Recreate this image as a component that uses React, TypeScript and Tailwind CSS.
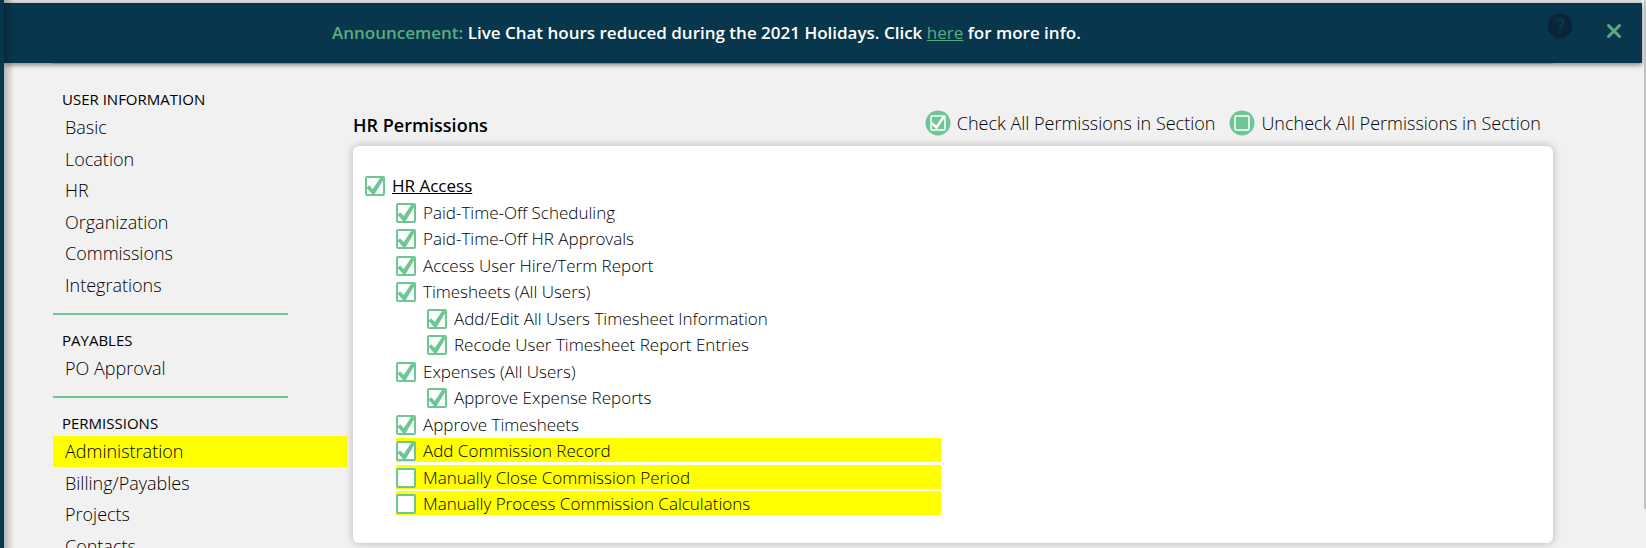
import { useState } from 'react'

interface NavGroup {
    title: string;
    items: string[];
}

interface Permission {
    id: string;
    label: string;
    level: number;
    checked: boolean;
    highlighted?: boolean;
}

const navGroups: NavGroup[] = [
    {
        title: 'USER INFORMATION',
        items: ['Basic', 'Location', 'HR', 'Organization', 'Commissions', 'Integrations'],
    },
    { title: 'PAYABLES', items: ['PO Approval'] },
    {
        title: 'PERMISSIONS',
        items: ['Administration', 'Billing/Payables', 'Projects', 'Contacts'],
    },
]

const initialPermissions: Permission[] = [
    { id: 'hr-access', label: 'HR Access', level: 0, checked: true },
    { id: 'pto-scheduling', label: 'Paid-Time-Off Scheduling', level: 1, checked: true },
    { id: 'pto-approvals', label: 'Paid-Time-Off HR Approvals', level: 1, checked: true },
    { id: 'hire-term', label: 'Access User Hire/Term Report', level: 1, checked: true },
    { id: 'timesheets', label: 'Timesheets (All Users)', level: 1, checked: true },
    { id: 'timesheets-edit', label: 'Add/Edit All Users Timesheet Information', level: 2, checked: true },
    { id: 'timesheets-recode', label: 'Recode User Timesheet Report Entries', level: 2, checked: true },
    { id: 'expenses', label: 'Expenses (All Users)', level: 1, checked: true },
    { id: 'expenses-approve', label: 'Approve Expense Reports', level: 2, checked: true },
    { id: 'timesheets-approve', label: 'Approve Timesheets', level: 1, checked: true },
    { id: 'commission-add', label: 'Add Commission Record', level: 1, checked: true, highlighted: true },
    { id: 'commission-close', label: 'Manually Close Commission Period', level: 1, checked: false, highlighted: true },
    { id: 'commission-process', label: 'Manually Process Commission Calculations', level: 1, checked: false, highlighted: true },
]

const indents = ['ml-0', 'ml-[31px]', 'ml-[62px]']

function Banner({ onClose }: { onClose: () => void }) {
    return (
        <header className="relative flex h-[60px] items-center pr-4 pl-[328px] bg-[#08374d] shadow-[0_2px_5px_rgba(0,0,0,0.45)]">
            <p className="flex-1 text-[17px] font-semibold text-white">
                <span className="text-[#5cab7d]">Announcement:</span> Live Chat hours reduced during the 2021 Holidays. Click{' '}
                <a href="#info" className="font-normal text-[#5cab7d] underline">here</a> for more info.
            </p>
            <button type="button" aria-label="Help" className="mr-[33px] mb-3.5">
                <svg width="26" height="26" viewBox="0 0 26 26" fill="none">
                    <circle cx="13" cy="13" r="12.5" fill="#0b2439" />
                    <path d="M9.5 9.2C10 7.6 11.3 6.8 13 6.8s3.4 1 3.4 2.9c0 2.7-3.6 2.8-3.6 6" stroke="#08374d" strokeWidth="2.4" />
                    <circle cx="12.8" cy="18.8" r="1.6" fill="#08374d" />
                </svg>
            </button>
            <button type="button" aria-label="Close announcement" onClick={onClose} className="mr-1 mb-1">
                <svg width="16" height="16" viewBox="0 0 16 16" stroke="#5cab7d" strokeWidth="3" strokeLinecap="round">
                    <path d="M2.5 2.5l11 11M13.5 2.5l-11 11" />
                </svg>
            </button>
        </header>
    )
}

function Sidebar() {
    return (
        <nav className="w-[294px] shrink-0 pt-[23px]">
            {navGroups.map((group, index) => (
                <div key={group.title} className={index > 0 ? 'mt-3' : ''}>
                    {index > 0 && <hr className="mb-[13px] w-[235px] border-t-2 border-[#6fc695]" />}
                    <h2 className="pl-[9px] text-[15px] leading-[25px] font-normal">{group.title}</h2>
                    <ul>
                        {group.items.map((item) => (
                            <li key={item} className="odd:mb-px">
                                <a
                                    href="#section"
                                    className={`block pl-3 text-lg leading-[31px] font-light ${item === 'Administration' ? 'bg-[#ffff00]' : ''}`}
                                >
                                    {item}
                                </a>
                            </li>
                        ))}
                    </ul>
                </div>
            ))}
        </nav>
    )
}

function PermissionRow({ permission, onToggle }: { permission: Permission; onToggle: (id: string) => void }) {
    return (
        <li className={`odd:mb-[3px] even:mb-0.5 ${indents[permission.level]}`}>
            <div className={`flex h-6 items-center gap-[7px] pt-0.5 ${permission.highlighted ? 'w-[545px] bg-[#ffff00]' : ''}`}>
                <span className="relative size-5 shrink-0">
                    <input
                        id={permission.id}
                        type="checkbox"
                        checked={permission.checked}
                        onChange={() => onToggle(permission.id)}
                        className="block size-5 appearance-none rounded-[2px] border-2 border-[#6fc695] bg-white"
                    />
                    {permission.checked && (
                        <svg className="pointer-events-none absolute inset-0" width="20" height="20" viewBox="0 0 20 20" fill="#6fc695">
                            <path d="M1.5 11.8l2.5-2.6 3.8 3.8L15.4 1.5l3.6 1.3L9.4 18.6H7.4z" />
                        </svg>
                    )}
                </span>
                <label
                    htmlFor={permission.id}
                    className={permission.level === 0 ? 'text-[17px] leading-6 font-normal underline' : 'text-[17px] leading-6 font-light'}
                >
                    {permission.label}
                </label>
            </div>
        </li>
    )
}

function SectionButton({ label, checked, onClick }: { label: string; checked: boolean; onClick: () => void }) {
    return (
        <button type="button" onClick={onClick} className="flex items-center gap-1.5 text-lg font-light">
            <svg width="26" height="26" viewBox="0 0 26 26" fill="none">
                <circle cx="13" cy="13" r="12.5" fill="#6fc695" />
                <rect x="6" y="6" width="14" height="14" rx="1" stroke="white" strokeWidth="1.5" />
                {checked && <path d="M6.5 13l5 4.5L18.5 7" stroke="white" strokeWidth="2.5" />}
            </svg>
            {label}
        </button>
    )
}

export default function App() {
    const [permissions, setPermissions] = useState(initialPermissions)
    const [bannerOpen, setBannerOpen] = useState(true)

    const toggle = (id: string) =>
        setPermissions(permissions.map((p) => (p.id === id ? { ...p, checked: !p.checked } : p)))

    const setAll = (checked: boolean) => setPermissions(permissions.map((p) => ({ ...p, checked })))

    return (
        <div className="relative h-screen overflow-hidden border-l-4 border-[#08374d] bg-[#f1f1f1] font-['Open_Sans',sans-serif] text-black">
            <div className="mr-1">
                <div className="h-[3px] bg-[#dddddd]" />
                {bannerOpen && <Banner onClose={() => setBannerOpen(false)} />}
                <div className="mr-[89px] ml-[49px] flex border-t border-[#c8c8c8]">
                    <Sidebar />
                    <main className="ml-1.5 flex-1 pt-[45px]">
                        <div className="flex items-start justify-between pr-3 pb-[7px]">
                            <h1 className="pt-0.5 text-lg font-semibold">HR Permissions</h1>
                            <div className="flex gap-3.5">
                                <SectionButton label="Check All Permissions in Section" checked onClick={() => setAll(true)} />
                                <SectionButton label="Uncheck All Permissions in Section" checked={false} onClick={() => setAll(false)} />
                            </div>
                        </div>
                        <ul className="rounded-md bg-white px-3 pt-[27px] pb-[25px] shadow-[0_0_8px_rgba(0,0,0,0.25)]">
                            {permissions.map((permission) => (
                                <PermissionRow key={permission.id} permission={permission} onToggle={toggle} />
                            ))}
                        </ul>
                    </main>
                </div>
            </div>
            {/* shade cast by the collapsed rail */}
            <div className="pointer-events-none absolute inset-y-0 left-0 w-2.5 bg-linear-to-r from-black/25 to-transparent" />
            {/* scroll thumb */}
            <div className="absolute top-0 right-0 bottom-[39px] w-0.5 bg-[#c1c1c1]" />
        </div>
    )
}
